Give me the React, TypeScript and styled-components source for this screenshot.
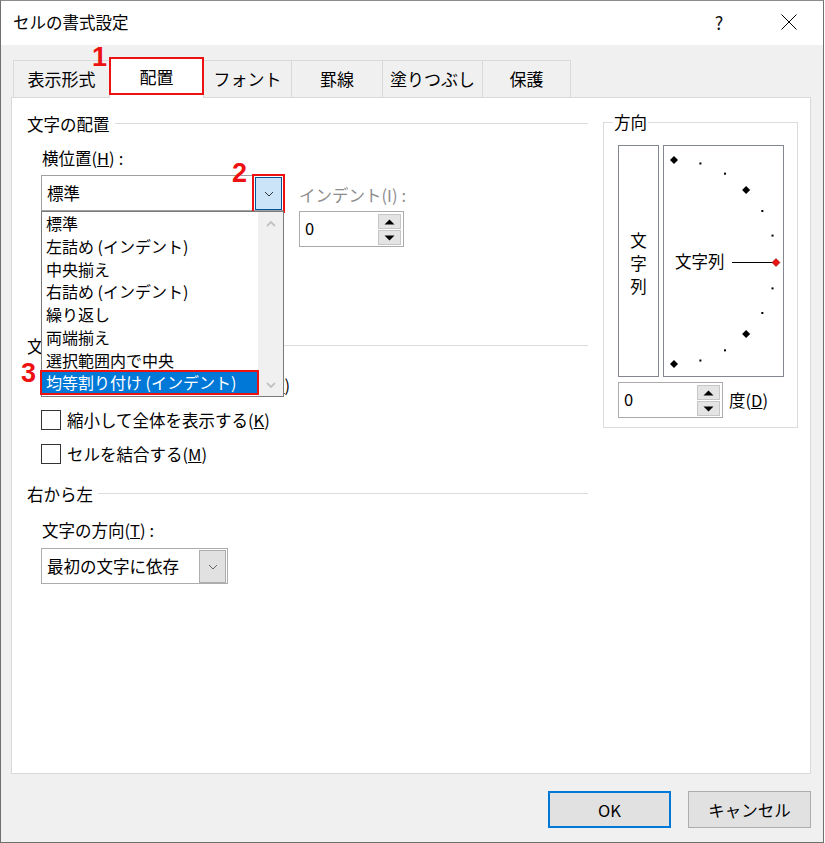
import React from "react";
import styled, { createGlobalStyle } from "styled-components";

const UI_FONT = `"Noto Sans CJK JP", "Noto Sans", "Liberation Sans", sans-serif`;

const GlobalStyle = createGlobalStyle`
  html, body { margin: 0; padding: 0; background: #ffffff; }
  #root { width: 825px; height: 843px; }
  *, *::before, *::after { box-sizing: border-box; }
`;

const Window = styled.div`
  width: 824px;
  height: 843px;
  border: 1px solid #6f6f6f;
  border-top-color: #8c8c8c;
  display: flex;
  flex-direction: column;
  background: #f0f0f0;
  font-family: ${UI_FONT};
  font-size: 16.5px;
  color: #000;
  overflow: hidden;
`;

const TitleBar = styled.div`
  height: 44px;
  flex: none;
  background: #fff;
  display: flex;
  align-items: center;
  padding: 0 11px 0 12px;
`;

const Title = styled.div`
  flex: 1;
  line-height: 20px;
  margin-top: -2px;
`;

const TitleButton = styled.div<{ $gap?: number }>`
  width: 46px;
  height: 44px;
  display: flex;
  align-items: center;
  justify-content: center;
  margin-left: ${(p) => p.$gap ?? 0}px;
  font-size: 18px;
  color: #111;
  margin-top: -2px;
`;

const Body = styled.div`
  flex: 1;
  display: flex;
  flex-direction: column;
  padding: 0 12px 0 10px;
`;

const TabRow = styled.div`
  position: relative;
  z-index: 2;
  margin-top: 15px;
  height: 37px;
  display: flex;
  align-items: flex-end;
  padding-left: 2px;
`;

const Tab = styled.div<{ $w: number; $active?: boolean; $first?: boolean }>`
  position: relative;
  width: ${(p) => p.$w}px;
  height: ${(p) => (p.$active ? 41 : 37)}px;
  margin-bottom: ${(p) => (p.$active ? -1 : 0)}px;
  background: ${(p) => (p.$active ? "#ffffff" : "#f0f0f0")};
  border-top: 1px solid #d9d9d9;
  border-right: 1px solid #d9d9d9;
  border-left: ${(p) => (p.$first ? "1px solid #d9d9d9" : "none")};
  display: flex;
  align-items: center;
  justify-content: center;
  padding-bottom: ${(p) => (p.$active ? 3 : 0)}px;
  font-size: 17px;
  line-height: 20px;
  white-space: nowrap;
`;

const RedBox = styled.div<{ $h: number }>`
  position: absolute;
  left: -1px;
  right: -1px;
  top: -1px;
  height: ${(p) => p.$h}px;
  border: 2px solid #ee1111;
  pointer-events: none;
`;

const Marker = styled.div<{ $x: number; $y: number }>`
  position: absolute;
  left: ${(p) => p.$x}px;
  top: ${(p) => p.$y}px;
  font-family: "Liberation Sans", Arial, sans-serif;
  font-weight: 700;
  font-size: 27px;
  line-height: 27px;
  color: #ee1111;
  z-index: 5;
`;

const Panel = styled.div`
  height: 677px;
  flex: none;
  background: #fff;
  border: 1px solid #d9d9d9;
  display: flex;
  padding: 16px 0 0 15px;
  gap: 15px;
`;

const LeftCol = styled.div`
  width: 561px;
  display: flex;
  flex-direction: column;
`;

const GroupHeader = styled.div<{ $mt?: number }>`
  display: flex;
  align-items: center;
  gap: 5px;
  height: 20px;
  line-height: 20px;
  margin-top: ${(p) => p.$mt ?? 0}px;
  white-space: nowrap;
  &::after {
    content: "";
    flex: 1;
    height: 1px;
    background: #dcdcdc;
    margin-top: -2px;
  }
`;

const FieldLabel = styled.div<{ $mt: number; $disabled?: boolean; $ml?: number }>`
  margin-top: ${(p) => p.$mt}px;
  margin-left: ${(p) => p.$ml ?? 15}px;
  line-height: 20px;
  color: ${(p) => (p.$disabled ? "#8d8d8d" : "#000")};
  white-space: nowrap;
`;

const Colon = styled.span`
  margin-left: 4px;
`;

const ComboRow = styled.div`
  display: flex;
  margin-top: 7px;
  margin-left: 14px;
  gap: 15px;
`;

const ComboWrap = styled.div<{ $w: number; $mt?: number; $ml?: number }>`
  position: relative;
  width: ${(p) => p.$w}px;
  height: 36px;
  flex: none;
  margin-top: ${(p) => p.$mt ?? 0}px;
  margin-left: ${(p) => p.$ml ?? 0}px;
`;

const ComboBox = styled.div<{ $border: string }>`
  width: 100%;
  height: 100%;
  border: 1px solid ${(p) => p.$border};
  background: #fff;
  display: flex;
  align-items: flex-start;
`;

const ComboText = styled.div`
  flex: 1;
  padding-left: 5px;
  line-height: 34px;
  white-space: nowrap;
`;

const ComboButton = styled.div<{ $hot?: boolean }>`
  width: 27px;
  height: 33px;
  margin: 1px 1px 0 0;
  background: ${(p) => (p.$hot ? "#cce4f7" : "#e1e1e1")};
  border: 1px solid ${(p) => (p.$hot ? "#005499" : "#adadad")};
  display: flex;
  align-items: center;
  justify-content: center;
  outline: ${(p) => (p.$hot ? "2px solid #ee1111" : "none")};
  outline-offset: 1px;
`;

const DropList = styled.div`
  position: absolute;
  z-index: 4;
  left: 0;
  top: 36px;
  width: 243px;
  height: 186px;
  border: 1px solid #7a7a7a;
  background: #fff;
  display: flex;
`;

const ListItems = styled.div`
  flex: 1;
  display: flex;
  flex-direction: column;
`;

const ListItem = styled.div<{ $sel?: boolean }>`
  height: 22.75px;
  line-height: 22.75px;
  font-size: 16px;
  white-space: nowrap;
  background: ${(p) => (p.$sel ? "#0078d7" : "transparent")};
  color: ${(p) => (p.$sel ? "#fff" : "#000")};
  outline: ${(p) => (p.$sel ? "2px solid #ee1111" : "none")};
  outline-offset: -1px;
  position: relative;
  margin-left: ${(p) => (p.$sel ? -1 : 0)}px;
  padding-left: ${(p) => (p.$sel ? 5 : 4)}px;
`;

const ScrollTrack = styled.div`
  width: 25px;
  background: #f0f0f0;
  display: flex;
  flex-direction: column;
  justify-content: space-between;
  align-items: center;
  padding: 9px 0 8px;
`;

const IndentBlock = styled.div`
  display: flex;
  flex-direction: column;
`;

const Spinner = styled.div<{ $w: number; $mt?: number }>`
  width: ${(p) => p.$w}px;
  height: 36px;
  margin-top: ${(p) => p.$mt ?? 0}px;
  border: 1px solid #ababab;
  background: #fff;
  display: flex;
  align-items: flex-start;
  flex: none;
`;

const SpinValue = styled.div`
  flex: 1;
  padding-left: 5px;
  line-height: 33px;
`;

const SpinButtons = styled.div`
  width: 23px;
  margin: 2px 2px 0 0;
  display: flex;
  flex-direction: column;
  gap: 1px;
`;

const SpinHalf = styled.div`
  height: 15px;
  background: #e4e4e4;
  border: 1px solid #c6c6c6;
  display: flex;
  align-items: center;
  justify-content: center;
`;

const CheckList = styled.div`
  margin-top: 19px;
  margin-left: 14px;
  display: flex;
  flex-direction: column;
  gap: 14.5px;
`;

const CheckRow = styled.div`
  display: flex;
  align-items: center;
  gap: 6px;
  height: 20px;
  line-height: 20px;
  white-space: nowrap;
`;

const CheckLabel = styled.span`
  white-space: nowrap;
`;

const CheckBox = styled.div`
  width: 20px;
  height: 20px;
  border: 1px solid #333;
  background: #fff;
  flex: none;
`;

const RightCol = styled.div`
  margin-top: -2px;
`;

const DirGroup = styled.fieldset`
  margin: 0;
  width: 195px;
  height: 316px;
  border: 1px solid #dcdcdc;
  padding: 0 0 0 9px;
  min-width: 0;
`;

const DirLegend = styled.legend`
  padding: 0 1px;
  line-height: 20px;
`;

const DirContent = styled.div`
  margin-left: 5px;
  display: flex;
  flex-direction: column;
`;

const OrientRow = styled.div`
  display: flex;
  gap: 4px;
  margin-top: 13px;
`;

const VerticalBox = styled.div`
  width: 41px;
  height: 232px;
  border: 1px solid #828790;
  display: flex;
  flex-direction: column;
  align-items: center;
  justify-content: center;
  padding-top: 5px;
`;

const VChar = styled.div`
  line-height: 23px;
`;

const ArcBox = styled.div`
  width: 121px;
  height: 232px;
  border: 1px solid #828790;
`;

const DegreeRow = styled.div`
  display: flex;
  align-items: center;
  gap: 6px;
  margin-top: 5px;
`;

const Footer = styled.div`
  display: flex;
  justify-content: flex-end;
  gap: 17px;
  padding-top: 17px;
`;

const DialogButton = styled.div<{ $default?: boolean }>`
  width: 123px;
  height: 37px;
  background: #e1e1e1;
  border: ${(p) => (p.$default ? "2px solid #0078d7" : "1px solid #adadad")};
  display: flex;
  align-items: center;
  justify-content: center;
  line-height: 20px;
`;

const Chevron = ({ color = "#444", up = false }: { color?: string; up?: boolean }) => (
  <svg width="10" height="6" viewBox="0 0 10 6">
    <polyline
      points={up ? "1,5 5,1 9,5" : "1,1 5,5 9,1"}
      fill="none"
      stroke={color}
      strokeWidth={up ? 1.8 : 1}
    />
  </svg>
);

const Tri = ({ up }: { up?: boolean }) => (
  <svg width="11" height="6" viewBox="0 0 11 6">
    <polygon points={up ? "0.5,5.5 5.5,0.5 10.5,5.5" : "0.5,0.5 10.5,0.5 5.5,5.5"} fill="#000" />
  </svg>
);

const SpinBox = ({ w, mt }: { w: number; mt?: number }) => (
  <Spinner $w={w} $mt={mt}>
    <SpinValue>0</SpinValue>
    <SpinButtons>
      <SpinHalf>
        <Tri up />
      </SpinHalf>
      <SpinHalf>
        <Tri />
      </SpinHalf>
    </SpinButtons>
  </Spinner>
);

const OrientationArc = () => {
  const cx = 10;
  const cy = 116;
  const r = 102;
  const pt = (deg: number) => {
    const a = (deg * Math.PI) / 180;
    return [cx + r * Math.cos(a), cy - r * Math.sin(a)];
  };
  const big = [90, 45, -45, -90];
  const small = [75, 60, 30, 15, -15, -30, -60, -75];
  const diamond = (x: number, y: number, s: number) =>
    `${x},${y - s} ${x + s},${y} ${x},${y + s} ${x - s},${y}`;
  const [rx, ry] = pt(0);
  return (
    <svg width="119" height="230" viewBox="0 0 119 230">
      {big.map((d) => {
        const [x, y] = pt(d);
        return <polygon key={d} points={diamond(x, y, 4)} fill="#000" />;
      })}
      {small.map((d) => {
        const [x, y] = pt(d);
        return <rect key={d} x={x - 1} y={y - 1} width="2" height="2" fill="#000" />;
      })}
      <line x1="68" y1={cy + 0.5} x2={rx - 3} y2={cy + 0.5} stroke="#000" strokeWidth="1" />
      <polygon points={diamond(rx, ry + 0.5, 4)} fill="#ee1111" stroke="#600" strokeWidth="0.5" />
      <text x="11" y={cy + 6} fontSize="16.5" fontFamily={UI_FONT} fill="#000">
        文字列
      </text>
    </svg>
  );
};

const tabs = [
  { label: "表示形式", w: 97 },
  { label: "配置", w: 94, active: true },
  { label: "フォント", w: 88 },
  { label: "罫線", w: 91 },
  { label: "塗りつぶし", w: 100 },
  { label: "保護", w: 88 },
];

const listItems = [
  "標準",
  "左詰め (インデント)",
  "中央揃え",
  "右詰め (インデント)",
  "繰り返し",
  "両端揃え",
  "選択範囲内で中央",
  "均等割り付け (インデント)",
];

export default function App() {
  return (
    <>
      <GlobalStyle />
      <Window>
        <TitleBar>
          <Title>セルの書式設定</Title>
          <TitleButton>?</TitleButton>
          <TitleButton $gap={24}>
            <svg width="16" height="16" viewBox="0 0 16 16">
              <line x1="0.5" y1="0.5" x2="15.5" y2="15.5" stroke="#000" strokeWidth="1" />
              <line x1="15.5" y1="0.5" x2="0.5" y2="15.5" stroke="#000" strokeWidth="1" />
            </svg>
          </TitleButton>
        </TitleBar>
        <Body>
          <TabRow>
            <Marker $x={81} $y={-16}>1</Marker>
            {tabs.map((t, i) => (
              <Tab key={t.label} $w={t.w} $active={t.active} $first={i === 0}>
                {t.label}
                {t.active && <RedBox $h={38} />}
              </Tab>
            ))}
          </TabRow>
          <Panel>
            <LeftCol>
              <GroupHeader>文字の配置</GroupHeader>
              <FieldLabel $mt={14}>
                横位置(<u>H</u>)<Colon>:</Colon>
              </FieldLabel>
              <ComboRow>
                <ComboWrap $w={243}>
                  <Marker $x={191} $y={-15}>2</Marker>
                  <ComboBox $border="#a0a0a0">
                    <ComboText>標準</ComboText>
                    <ComboButton $hot>
                      <Chevron color="#333" />
                    </ComboButton>
                  </ComboBox>
                  <DropList>
                    <Marker $x={-21} $y={148}>3</Marker>
                    <ListItems>
                      {listItems.map((s, i) => (
                        <ListItem key={s} $sel={i === listItems.length - 1}>
                          {s}
                        </ListItem>
                      ))}
                    </ListItems>
                    <ScrollTrack>
                      <Chevron color="#c2c2c2" up />
                      <svg width="10" height="6" viewBox="0 0 10 6">
                        <polyline points="1,1 5,5 9,1" fill="none" stroke="#c2c2c2" strokeWidth="1.8" />
                      </svg>
                    </ScrollTrack>
                  </DropList>
                </ComboWrap>
                <IndentBlock>
                  <FieldLabel $mt={10} $ml={0} $disabled>
                    インデント(I)<Colon>:</Colon>
                  </FieldLabel>
                  <SpinBox w={105} mt={6} />
                </IndentBlock>
              </ComboRow>

              <GroupHeader $mt={89}>文字の制御</GroupHeader>
              <CheckList>
                <CheckRow>
                  <CheckBox />
                  <CheckLabel>
                    折り返して全体を表示する(<u>W</u>)
                  </CheckLabel>
                </CheckRow>
                <CheckRow>
                  <CheckBox />
                  <CheckLabel>
                    縮小して全体を表示する(<u>K</u>)
                  </CheckLabel>
                </CheckRow>
                <CheckRow>
                  <CheckBox />
                  <CheckLabel>
                    セルを結合する(<u>M</u>)
                  </CheckLabel>
                </CheckRow>
              </CheckList>

              <GroupHeader $mt={20}>右から左</GroupHeader>
              <FieldLabel $mt={16}>
                文字の方向(<u>T</u>)<Colon>:</Colon>
              </FieldLabel>
              <ComboWrap $w={187} $mt={8} $ml={14}>
                <ComboBox $border="#acacac">
                  <ComboText>最初の文字に依存</ComboText>
                  <ComboButton>
                    <Chevron color="#666" />
                  </ComboButton>
                </ComboBox>
              </ComboWrap>
            </LeftCol>

            <RightCol>
              <DirGroup>
                <DirLegend>方向</DirLegend>
                <DirContent>
                  <OrientRow>
                    <VerticalBox>
                      <VChar>文</VChar>
                      <VChar>字</VChar>
                      <VChar>列</VChar>
                    </VerticalBox>
                    <ArcBox>
                      <OrientationArc />
                    </ArcBox>
                  </OrientRow>
                  <DegreeRow>
                    <SpinBox w={105} />
                    <span>
                      度(<u>D</u>)
                    </span>
                  </DegreeRow>
                </DirContent>
              </DirGroup>
            </RightCol>
          </Panel>
          <Footer>
            <DialogButton $default>OK</DialogButton>
            <DialogButton>キャンセル</DialogButton>
          </Footer>
        </Body>
      </Window>
    </>
  );
}
